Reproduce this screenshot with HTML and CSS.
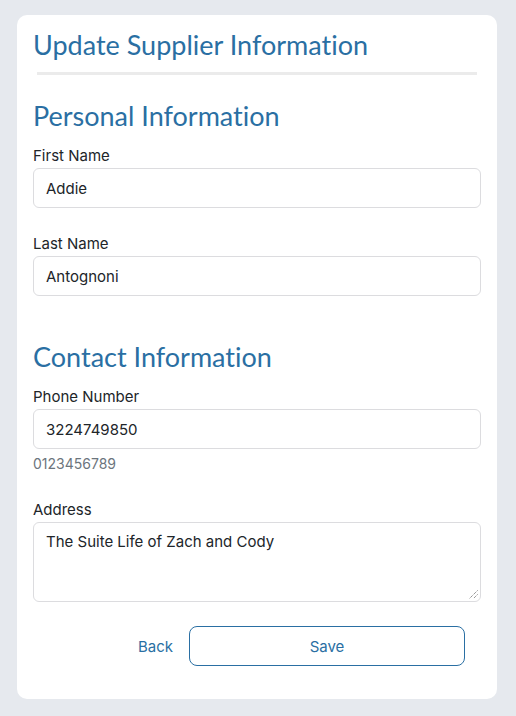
FILE: index.html
```html
<!DOCTYPE html>
<html>
<head>
<meta charset="utf-8">
<link rel="stylesheet" href="styles.css">
</head>
<body>
<div class="card">
  <h1 class="title">Update Supplier Information</h1>
  <div class="divider"></div>
  <h2 class="section">Personal Information</h2>
  <div class="field">
    <label class="label">First Name</label>
    <div class="input">Addie</div>
  </div>
  <div class="field">
    <label class="label">Last Name</label>
    <div class="input">Antognoni</div>
  </div>
  <h2 class="section section-contact">Contact Information</h2>
  <div class="field">
    <label class="label">Phone Number</label>
    <div class="input">3224749850</div>
    <div class="help">0123456789</div>
  </div>
  <div class="field">
    <label class="label">Address</label>
    <div class="input textarea">The Suite Life of Zach and Cody
      <svg class="grip" width="9" height="9" viewBox="0 0 9 9"><path d="M8.5 0.5L0.5 8.5M8.5 4.5L4.5 8.5" stroke="#666" stroke-width="1" stroke-dasharray="1 1"/></svg>
    </div>
  </div>
  <div class="actions">
    <button class="btn-link">Back</button>
    <button class="btn-save">Save</button>
  </div>
</div>
</body>
</html>
```
FILE: styles.css
```css
html, body { margin: 0; padding: 0; }
body {
  background: #e6e9ee;
  font-family: Inter, "Liberation Sans", sans-serif;
  color: #212529;
  padding: 15px 19px 18px 17px;
}
.card {
  background: #fff;
  border-radius: 10px;
  padding: 13px 16px 33px;
}
.title, .section {
  font-family: Lato, "Noto Sans", sans-serif;
  font-weight: 400;
  font-size: 27px;
  line-height: 34px;
  color: #2a6fa3;
  margin: 0;
  font-variant-ligatures: none;
}
.divider {
  height: 3px;
  background: #ebebeb;
  margin: 10px 4px 0;
}
.section { margin-top: 24px; }
.section-contact { margin-top: 44px; }
.field { margin-top: 13px; }
.field + .field { margin-top: 26px; }
.label { display: block; font-size: 15px; line-height: 20px; margin-bottom: 2px; }
.input {
  box-sizing: border-box;
  height: 40px;
  border: 1px solid #dcdcdf;
  border-radius: 6px;
  padding: 0 12px;
  font-size: 15px;
  line-height: 39px;
  color: #212529;
}
.textarea {
  position: relative;
  height: 80px;
  line-height: 22px;
  padding-top: 8px;
}
.grip { position: absolute; right: 2px; bottom: 2px; }
.help { font-size: 14px; color: #6c757d; margin-top: 5px; line-height: 20px; }
.actions {
  display: flex;
  justify-content: flex-end;
  align-items: center;
  gap: 4px;
  margin-top: 24px;
  padding-right: 16px;
}
.btn-link, .btn-save {
  font-family: Inter, "Liberation Sans", sans-serif;
  font-size: 15px;
  color: #2a6fa3;
  background: none;
  cursor: pointer;
}
.btn-link { border: none; padding: 0 12px; height: 40px; }
.btn-save {
  width: 276px;
  height: 40px;
  border: 1px solid #2a6fa3;
  border-radius: 8px;
}
```
